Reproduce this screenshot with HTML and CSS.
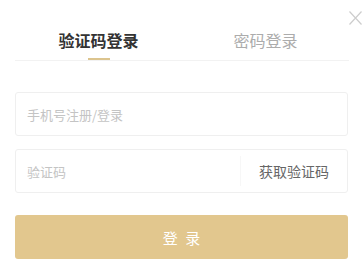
FILE: index.html
```html
<!DOCTYPE html>
<html lang="zh-CN">
<head>
<meta charset="utf-8">
<title>登录</title>
<link rel="stylesheet" href="styles.css">
</head>
<body>
<div class="panel">
  <svg class="close" width="13" height="14" viewBox="0 0 13 14" aria-label="关闭">
    <path d="M0.5 0.5 L12.5 13.5 M12.5 0.5 L0.5 13.5" stroke="#cdcdcd" stroke-width="1.2" fill="none"/>
  </svg>
  <div class="tabs">
    <div class="tab active"><span class="tab-label">验证码登录</span><span class="tab-bar"></span></div>
    <div class="tab"><span class="tab-label">密码登录</span><span class="tab-bar"></span></div>
  </div>
  <div class="field">
    <span class="placeholder">手机号注册/登录</span>
  </div>
  <div class="field field-code">
    <span class="placeholder">验证码</span>
    <span class="get-code">获取验证码</span>
  </div>
  <div class="submit">登 录</div>
</div>
</body>
</html>
```
FILE: styles.css
```css
html, body {
  margin: 0;
  padding: 0;
  background: #ffffff;
}
body {
  font-family: "Noto Sans CJK SC", "Noto Sans", sans-serif;
  width: 364px;
  height: 267px;
  overflow: hidden;
}
.panel {
  position: relative;
  padding: 32px 16px 0 15px;
}
.close {
  position: absolute;
  top: 11px;
  right: 2px;
  display: block;
}
.tabs {
  display: flex;
  border-bottom: 1px solid #f2f2f2;
  margin-right: -1px;
}
.tab {
  flex: 1;
  display: flex;
  flex-direction: column;
  align-items: center;
}
.tab-label {
  font-size: 16px;
  line-height: 16px;
  color: #acacac;
}
.tab-bar {
  width: 22px;
  height: 2px;
  margin-top: 10px;
  background: transparent;
}
.tab.active .tab-label {
  color: #333333;
  font-weight: bold;
}
.tab.active .tab-bar {
  background: #dcc48e;
}
.field {
  display: flex;
  align-items: center;
  height: 42px;
  border: 1px solid #efefef;
  border-radius: 3px;
  margin-top: 31px;
  padding-left: 11px;
}
.field-code {
  margin-top: 13px;
  padding-left: 11px;
}
.placeholder {
  flex: 1;
  font-size: 13px;
  color: #c4c4c4;
}
.get-code {
  width: 106px;
  align-self: stretch;
  display: flex;
  align-items: center;
  justify-content: center;
  border-left: 1px solid #f7f7f7;
  margin: 6px 0;
  font-size: 14px;
  color: #666666;
}
.submit {
  margin-top: 22px;
  height: 44px;
  border-radius: 3px;
  background: #e2c78e;
  color: #ffffff;
  font-size: 15px;
  word-spacing: 4px;
  display: flex;
  align-items: center;
  justify-content: center;
}
```
